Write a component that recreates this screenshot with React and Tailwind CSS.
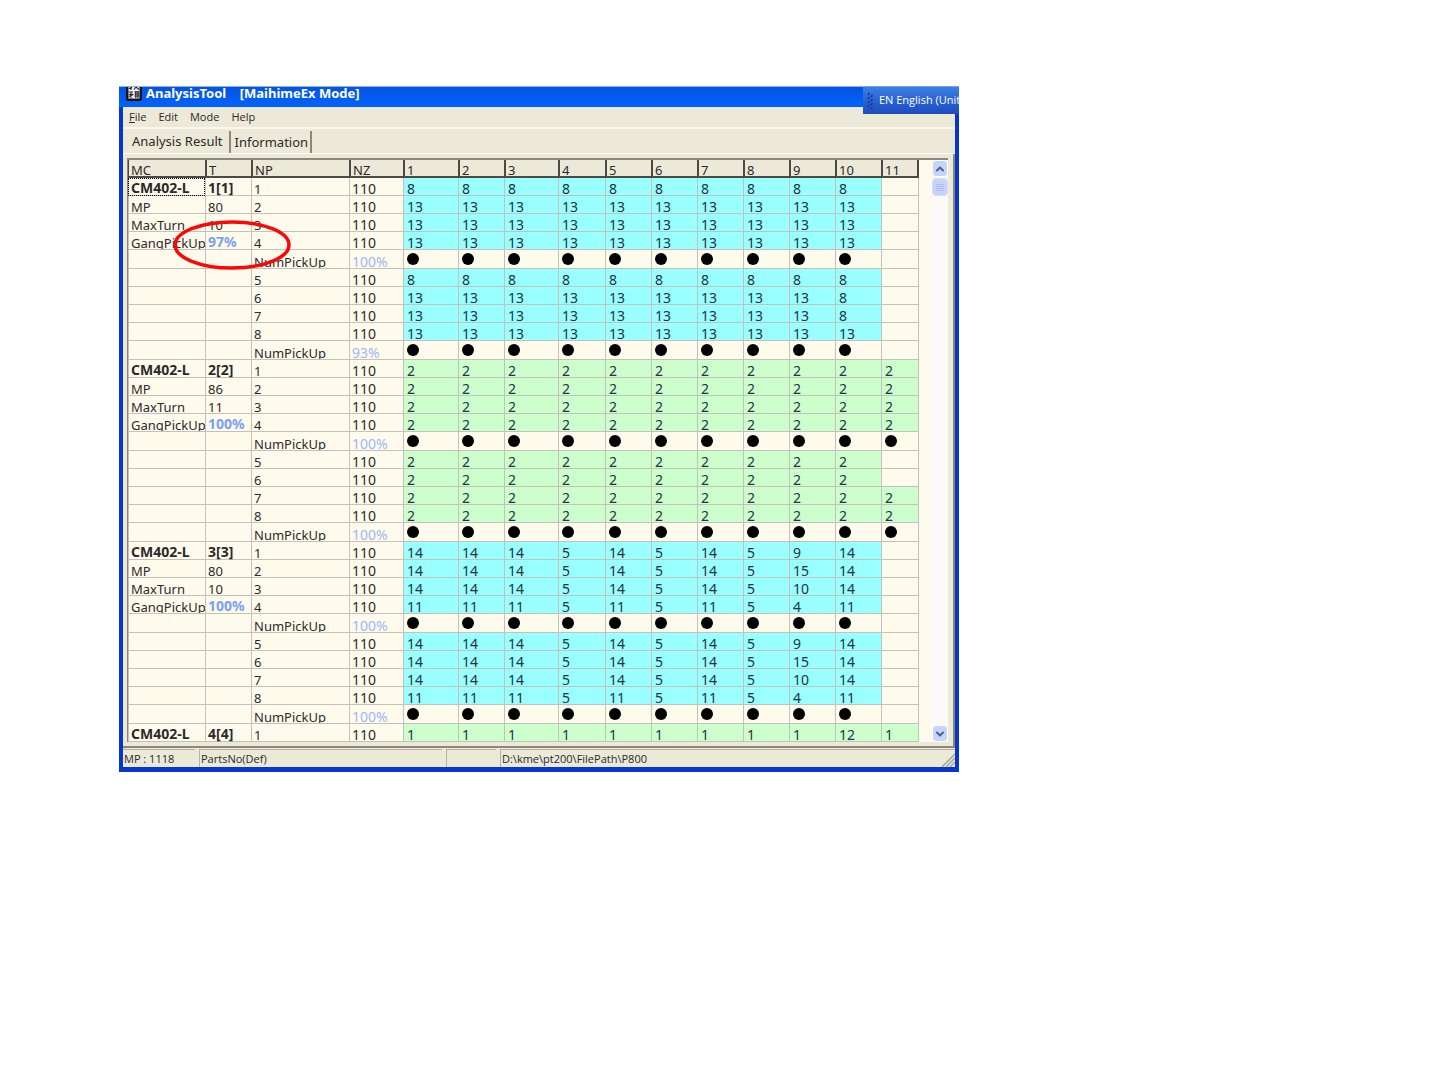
import React, { useState } from 'react';
import clsx from 'clsx';
import { ChevronUp, ChevronDown } from 'lucide-react';

const COLUMNS = ['MC', 'T', 'NP', 'NZ', '1', '2', '3', '4', '5', '6', '7', '8', '9', '10', '11'];

const COL_WIDTHS = [
  'w-[77px]', 'w-[46px]', 'w-[98px]', 'w-[54px]', 'w-[55px]', 'w-[46px]', 'w-[54px]', 'w-[47px]',
  'w-[46px]', 'w-[46px]', 'w-[46px]', 'w-[46px]', 'w-[46px]', 'w-[46px]', 'w-[38px]',
];

const fill = (value, count = 10) => Array(count).fill(value);

const MIX_A = [14, 14, 14, 5, 14, 5, 14, 5, 9, 14];
const MIX_B = [14, 14, 14, 5, 14, 5, 14, 5, 15, 14];
const MIX_C = [14, 14, 14, 5, 14, 5, 14, 5, 10, 14];
const MIX_D = [11, 11, 11, 5, 11, 5, 11, 5, 4, 11];

const MACHINES = [
  {
    name: 'CM402-L', table: '1[1]', mp: 80, maxTurn: 10, gang: '97%', color: 'cyan', dots: 10,
    pickUp: ['100%', '93%'],
    nozzles: [
      fill(8), fill(13), fill(13), fill(13),
      fill(8), [...fill(13, 9), 8], [...fill(13, 9), 8], fill(13),
    ],
  },
  {
    name: 'CM402-L', table: '2[2]', mp: 86, maxTurn: 11, gang: '100%', color: 'green', dots: 11,
    pickUp: ['100%', '100%'],
    nozzles: [
      fill(2, 11), fill(2, 11), fill(2, 11), fill(2, 11),
      fill(2), fill(2), fill(2, 11), fill(2, 11),
    ],
  },
  {
    name: 'CM402-L', table: '3[3]', mp: 80, maxTurn: 10, gang: '100%', color: 'cyan', dots: 10,
    pickUp: ['100%', '100%'],
    nozzles: [MIX_A, MIX_B, MIX_C, MIX_D, MIX_A, MIX_B, MIX_C, MIX_D],
  },
  {
    name: 'CM402-L', table: '4[4]', color: 'green',
    nozzles: [[...fill(1, 9), 12, 1]],
  },
];

// Flatten every machine into the rows of the grid
const buildRows = (machine) => {
  const left = [
    [machine.name, machine.table],
    ['MP', machine.mp],
    ['MaxTurn', machine.maxTurn],
    ['GangPickUp', machine.gang],
  ];
  const rows = [];
  machine.nozzles.forEach((values, i) => {
    const [mc, t] = left[i] || ['', ''];
    rows.push({ mc, t, np: i + 1, nz: 110, values, color: machine.color, head: i === 0, gang: i === 3 });
    if (i % 4 === 3) {
      rows.push({ mc: '', t: '', np: 'NumPickUp', nz: machine.pickUp[(i - 3) / 4], dots: machine.dots });
    }
  });
  return rows;
};

const ROWS = MACHINES.flatMap(buildRows);

const Cell = ({ children, tall, bold, clip, className }) => (
  <td className={clsx('border-b border-l border-[#c3c0bd] align-top', bold && 'text-[14px] font-bold', className)}>
    <div
      className={clsx(
        'flow-root whitespace-nowrap pl-[2px]',
        tall ? 'h-[18px] leading-6' : 'h-[17px]',
        !tall && (bold ? 'leading-5' : 'leading-[22px]'),
        clip && 'overflow-hidden',
      )}
    >
      {children}
    </div>
  </td>
);

const Dot = () => (
  <svg viewBox="0 0 12 12" className="mt-[3px] block h-3 w-3" aria-hidden="true">
    <circle cx="6" cy="6" r="6" fill="#000" />
  </svg>
);

const GridRow = ({ row, first }) => {
  const tall = Boolean(row.dots);
  return (
    <tr>
      <Cell
        tall={tall}
        bold={row.head}
        clip={row.gang}
        className={first && 'outline-1 -outline-offset-1 outline-dotted outline-black'}
      >
        {row.mc}
      </Cell>
      <Cell tall={tall} bold={row.head || row.gang} className={clsx(row.gang && 'text-[#7ba0f8]')}>
        {row.t}
      </Cell>
      <Cell tall={tall} clip={tall}>{row.np}</Cell>
      <Cell tall={tall} className={clsx('text-[14px]', tall && 'text-[#9db7f8]')}>{row.nz}</Cell>
      {COLUMNS.slice(4).map((col, i) => {
        const value = row.values?.[i];
        return (
          <Cell
            key={col}
            tall={tall}
            className={clsx(
              'pl-px text-[14px] text-[#234]',
              i === 10 && 'border-r',
              value !== undefined && (row.color === 'cyan' ? 'bg-[#99ffff]' : 'bg-[#ccffcc]'),
            )}
          >
            {i < row.dots ? <Dot /> : value}
          </Cell>
        );
      })}
    </tr>
  );
};

const ResultGrid = () => (
  <table className="w-[791px] table-fixed border-separate border-spacing-0 self-start bg-[#fffbec] text-[13px] text-[#2a2a2a]">
    <colgroup>
      {COL_WIDTHS.map((width, i) => <col key={i} className={width} />)}
    </colgroup>
    <thead>
      <tr>
        {COLUMNS.map((col, i) => (
          <th
            key={col}
            className={clsx(
              'border-b-2 border-[#4b4a46] bg-[#ece9d8] text-left align-top font-normal',
              i === 0 ? 'border-l' : 'border-l-2',
              i === 14 && 'border-r-2',
            )}
          >
            <div className="h-4 pl-[2px] leading-5">{col}</div>
          </th>
        ))}
      </tr>
    </thead>
    <tbody>
      {ROWS.map((row, i) => <GridRow key={i} row={row} first={i === 0} />)}
    </tbody>
  </table>
);

const ScrollBar = () => (
  <div className="flex w-4 flex-col gap-px bg-[#fbfaf8]">
    <button type="button" aria-label="Scroll up" className="flex h-[17px] items-center justify-center rounded-sm border border-white bg-[#c6d4fb]">
      <ChevronUp size={12} strokeWidth={4} color="#4d6185" />
    </button>
    <button type="button" aria-label="Scroll position" className="flex h-[18px] flex-col items-center justify-center gap-px rounded-sm border border-[#d5e0fb] bg-[#c6d4fb]">
      {[0, 1, 2, 3].map((n) => <span key={n} className="h-px w-2 bg-[#a9bdf2]" />)}
    </button>
    <div className="flex-1" />
    <button type="button" aria-label="Scroll down" className="flex h-[17px] items-center justify-center rounded-sm border border-white bg-[#c6d4fb]">
      <ChevronDown size={12} strokeWidth={4} color="#4d6185" />
    </button>
  </div>
);

const AppIcon = () => (
  <svg viewBox="0 0 16 14" className="h-[14px] w-4" aria-hidden="true">
    <path d="M0 0H16V12Q16 14 14 14H2Q0 14 0 12Z" fill="#151515" />
    <path d="M2.500 0H13.500V11.500H2.500Z" fill="#f2f2f2" />
    <path d="M3 1.500L6 0.500M5 0V3M8 2.500L10 0L13 2.500M3 5H7M8.500 5H13M5 4.500V11M3 7.500H7.500M3 9.500L6.500 8M8.500 7H13.500M8.500 9H13.500M9.800 4V11M12 4V11" stroke="#222" strokeWidth="1.100" fill="none" />
  </svg>
);

const LanguageBar = () => (
  <div className="absolute top-0 right-0 flex h-7 w-24 items-center overflow-hidden border-t border-[#6ea3ee] bg-linear-to-b from-[#3b80e4] via-[#2a62d2] to-[#1f4cc0] pl-1 font-['Open_Sans',sans-serif] text-[11px] whitespace-nowrap text-white">
    <svg viewBox="0 0 6 18" className="mr-[6px] h-[18px] w-[6px] shrink-0" aria-hidden="true">
      {[1, 5, 9, 13].map((y) => (
        <path key={y} d={`M1 ${y + 2}L2.500 ${y}M4 ${y + 4}L5.500 ${y + 2}`} stroke="#17378f" strokeWidth="1.500" />
      ))}
    </svg>
    EN English (Unit
  </div>
);

const App = () => {
  const [tab, setTab] = useState('Analysis Result');

  return (
    <div className="min-h-screen bg-white pt-[86px] pr-[481px] pb-8 pl-[119px] font-['Noto_Sans',sans-serif]">
      <main className="relative min-w-[840px] bg-[#0a3bd6] text-[#2a2a2a]">
        {/* Title bar */}
        <header className="flex h-[21px] items-start gap-1 border-t border-[#8fb2ee] bg-linear-to-b from-[#0553e2] to-[#0264fc] pl-[7px]">
          <AppIcon />
          <h1 className="text-[13px] leading-3 font-bold whitespace-pre text-white">
            {'AnalysisTool    [MaihimeEx Mode]'}
          </h1>
        </header>

        <div className="border-x-4 border-b-[5px] border-[#0736cf] bg-[#ece9d8]">
          {/* Menu */}
          <nav className="flex h-5 items-center gap-3 pl-[6px] font-['Open_Sans',sans-serif] text-[11px]">
            <button type="button"><span className="underline">F</span>ile</button>
            <button type="button">Edit</button>
            <button type="button">Mode</button>
            <button type="button">Help</button>
          </nav>

          {/* Tabs */}
          <div role="tablist" className="flex h-[27px] items-stretch border-t-2 border-b border-t-[#f8f6ee] border-b-white text-[13px]">
            {['Analysis Result', 'Information'].map((name) => (
              <button
                key={name}
                type="button"
                role="tab"
                aria-selected={tab === name}
                onClick={() => setTab(name)}
                className={clsx(
                  'mt-[2px] border-r-2 border-[#8b887a]',
                  tab === name ? 'pr-[6px] pl-[9px]' : 'pt-[2px] pr-[2px] pl-1',
                )}
              >
                {name}
              </button>
            ))}
          </div>

          <div className="border-r-2 border-[#8b887a] pt-1 pr-[5px] pb-1 pl-1">
            <section className="flex justify-between border-t-2 border-l border-[#8b887a] bg-[#fffbec]">
              <ResultGrid />
              <ScrollBar />
            </section>
          </div>

          {/* Status bar */}
          <footer className="flex h-[21px] items-stretch gap-1 border-t-2 border-[#8b887a] pt-px font-['Open_Sans',sans-serif] text-[11px] leading-[17px]">
            <div className="w-[72px] border-t border-[#b5b2a3] pl-px">MP : 1118</div>
            <div className="w-[243px] border-t border-l border-[#b5b2a3] pl-px">PartsNo(Def)</div>
            <div className="w-[50px] border-t border-l border-[#b5b2a3]" />
            <div className="flex flex-1 items-end justify-between border-t border-l border-[#b5b2a3] pl-px">
              <span>D:\kme\pt200\FilePath\P800</span>
              <svg viewBox="0 0 14 14" className="h-[14px] w-[14px]" aria-hidden="true">
                <path d="M1 14L14 1M5 14L14 5M9 14L14 9" stroke="#a8a595" strokeWidth="1.500" />
              </svg>
            </div>
          </footer>
        </div>

        <LanguageBar />

        {/* Highlight round the GangPickUp rate */}
        <svg viewBox="0 0 118 50" className="pointer-events-none absolute top-[134px] left-[55px] h-[50px] w-[118px]" aria-hidden="true">
          <ellipse cx="58" cy="25" rx="57" ry="23" fill="none" stroke="#fb0707" strokeWidth="3.500" />
        </svg>
      </main>
    </div>
  );
};

export default App;
